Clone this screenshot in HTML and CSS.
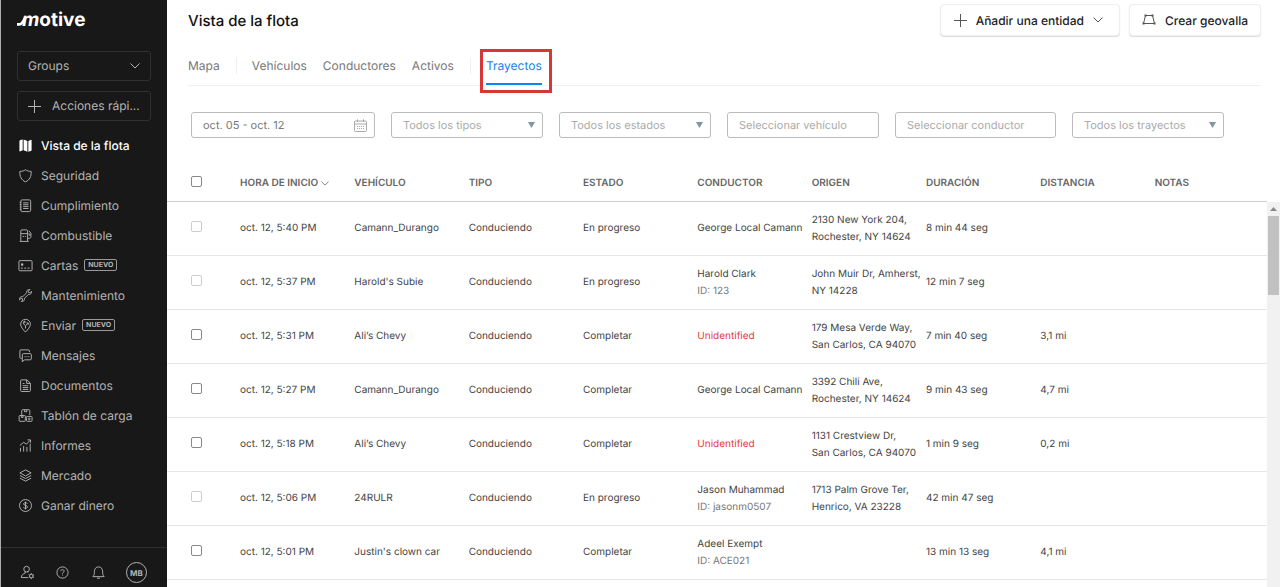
FILE: index.html
```html
<!DOCTYPE html>
<html lang="es">
<head>
    <meta charset="UTF-8">
    <meta name="viewport" content="width=device-width, initial-scale=1.0">
    <title>Vista de la flota</title>
    <link rel="stylesheet" href="styles.css">
</head>
<body>

    <aside class="sidebar">
        <a class="logo" href="#"><svg class="logo-tail" viewBox="0 0 9 10"><path d="M0 8.4H2.2C5 8.4 5.6 6 8.6 1" fill="none" stroke="#fff" stroke-width="2.6"/></svg><span class="logo-m">m</span><span>otive</span></a>

        <button class="side-button groups">
            <span>Groups</span>
            <svg class="chevron" viewBox="0 0 10 6"><path d="M.5 .5L5 5L9.5 .5"/></svg>
        </button>
        <button class="side-button actions">
            <svg class="plus" viewBox="0 0 13 13"><path d="M6.5 0V13M0 6.5H13"/></svg>
            <span>Acciones rápi...</span>
        </button>

        <nav class="nav">
            <a class="nav-item active" href="#">
                <svg class="icon" viewBox="0 0 16 16"><path class="solid" d="M1.5 3.4Q1.5 2.4 2.5 2.2L5 1.6V13L2.6 14.2Q1.5 14.6 1.5 13.6ZM6 1.6L10 3.2V14.6L6 13ZM11 3.2L13.4 2Q14.5 1.6 14.5 2.6V12.8Q14.5 13.6 13.6 13.9L11 14.6Z"/></svg>
                <span>Vista de la flota</span>
            </a>
            <a class="nav-item" href="#">
                <svg class="icon" viewBox="0 0 16 16"><path d="M8 1.8C6.2 3.2 4.2 3.6 2 3.6C1.6 9 3.6 12.8 8 14.8C12.4 12.8 14.4 9 14 3.6C11.8 3.6 9.8 3.2 8 1.8Z"/></svg>
                <span>Seguridad</span>
            </a>
            <a class="nav-item" href="#">
                <svg class="icon" viewBox="0 0 16 16"><rect x="3" y="2" width="10.5" height="12.5" rx="1.5"/><path d="M5.5 5.2H11.2M5.5 7.2H11.2M5.5 9.2H11.2M5.5 11.2H11.2M1.8 4.5H3.5M1.8 7H3.5M1.8 9.5H3.5M1.8 12H3.5"/></svg>
                <span>Cumplimiento</span>
            </a>
            <a class="nav-item" href="#">
                <svg class="icon" viewBox="0 0 16 16"><path d="M3 14V3.2C3 2.4 3.4 2 4.2 2H9C9.8 2 10.2 2.4 10.2 3.2V14M1.8 14.3H11.4M3 6H10.2M10.2 11H12.2C13.8 11 13.8 9.5 13.8 8V5.5L11.6 3M11.8 5.5V7.5H13.8M5 9H6.5M7.5 9H8.5"/></svg>
                <span>Combustible</span>
            </a>
            <a class="nav-item" href="#">
                <svg class="icon" viewBox="0 0 16 16"><rect x="1" y="2.8" width="14" height="10.8" rx="1"/><path d="M3 10.8H5.2M6.6 10.8H8.6M10 10.8H12.4"/><path class="solid" d="M3.2 5.8H5.6V8.2H3.2Z"/></svg>
                <span>Cartas</span><span class="badge">NUEVO</span>
            </a>
            <a class="nav-item" href="#">
                <svg class="icon" viewBox="0 0 16 16"><path d="M9.2 5.2C8.8 3 10.4 1.3 12.6 1.6L11 3.4L11.3 4.9L12.8 5.1L14.4 3.5C14.8 5.6 13.2 7.4 10.9 7L7 10.9C7.3 13.2 5.6 14.8 3.4 14.4L5 12.8L4.7 11.3L3.3 11L1.6 12.6C1.2 10.4 2.9 8.8 5.1 9.2Z"/></svg>
                <span>Mantenimiento</span>
            </a>
            <a class="nav-item" href="#">
                <svg class="icon" viewBox="0 0 16 16"><path d="M8 15C5.5 12.4 2.8 9.4 2.8 6.6C2.8 3.6 5.2 1.4 8 1.4S13.2 3.6 13.2 6.6C13.2 9.4 10.5 12.4 8 15Z"/><path d="M8 11.2V8.2L5.2 5.6L7 4M8 8.2L10.8 5.6M9 5.2L10.9 5.4V7.2"/><circle cx="6.9" cy="4.2" r=".8"/></svg>
                <span>Enviar</span><span class="badge">NUEVO</span>
            </a>
            <a class="nav-item" href="#">
                <svg class="icon" viewBox="0 0 16 16"><path d="M4 11H2.8C2.3 11 2 10.7 2 10.2V3.2C2 2.4 2.4 2 3.2 2H11C11.8 2 12.2 2.4 12.2 3.2V4.4"/><path d="M4.6 14.8V7C4.6 6.4 5 6 5.6 6H13C13.8 6 14.2 6.4 14.2 7V11.6C14.2 12.2 13.8 12.6 13 12.6H6.8Z"/><path d="M7 9.3H8M9 9.3H10M11 9.3H12"/></svg>
                <span>Mensajes</span>
            </a>
            <a class="nav-item" href="#">
                <svg class="icon" viewBox="0 0 16 16"><path d="M2.8 3C2.8 2.3 3.2 2 3.8 2H9.4L13.2 5.6V13.4C13.2 14 12.8 14.4 12.2 14.4H3.8C3.2 14.4 2.8 14 2.8 13.4ZM9.2 2V5.8H13.2M5 5.8H7M5 8.2H11M5 10.2H11M5 12.2H11"/></svg>
                <span>Documentos</span>
            </a>
            <a class="nav-item" href="#">
                <svg class="icon" viewBox="0 0 16 16"><path d="M4 7.6V2.8C4 2.2 4.4 1.8 5 1.8H11.6C12.2 1.8 12.6 2.2 12.6 2.8V7.6M7 2V4H9.4V2"/><rect x="1.2" y="8" width="6.6" height="6.2" rx=".8"/><path d="M3.6 8V10H5.4V8"/><rect x="9" y="9" width="6" height="5.2" rx=".8"/><circle cx="12" cy="11.6" r=".9"/></svg>
                <span>Tablón de carga</span>
            </a>
            <a class="nav-item" href="#">
                <svg class="icon" viewBox="0 0 16 16"><path d="M2.6 14.5V10.5M6 14.5V8.5M9.5 14.5V9.5M13 14.5V6M2 8L6 4.6L9 6.6L13 2.4M10.2 2H13.4V5"/></svg>
                <span>Informes</span>
            </a>
            <a class="nav-item" href="#">
                <svg class="icon" viewBox="0 0 16 16"><path d="M8 2L14 5.2L8 8.4L2 5.2ZM2 8L8 11.2L14 8M2 10.8L8 14L14 10.8"/></svg>
                <span>Mercado</span>
            </a>
            <a class="nav-item" href="#">
                <svg class="icon" viewBox="0 0 16 16"><circle cx="8" cy="8" r="6.4"/><path d="M10 6C9.6 5.2 9 5 8 5C6.8 5 6 5.5 6 6.4C6 8.4 10.1 7.3 10.1 9.5C10.1 10.5 9.2 11 8 11C6.9 11 6.2 10.7 5.8 9.9M8 3.8V12.2"/></svg>
                <span>Ganar dinero</span>
            </a>
        </nav>

        <div class="side-footer">
            <button class="foot-button" aria-label="Cuenta">
                <svg class="icon" viewBox="0 0 16 16"><circle cx="7" cy="4.4" r="3"/><path d="M5.6 7V8.6C3.4 9.4 1.4 10.6 1.4 13.4H8.4M8.4 7V8.2"/><circle cx="12" cy="11.8" r="1.9"/><path d="M12 8.6V9.9M12 13.7V15M9.2 10.2L10.4 10.9M13.6 12.7L14.8 13.4M9.2 13.4L10.4 12.7M13.6 10.9L14.8 10.2"/></svg>
            </button>
            <button class="foot-button" aria-label="Ayuda">
                <svg class="icon" viewBox="0 0 16 16"><circle cx="8" cy="8" r="6"/><path d="M6.2 6.6C6.2 5.5 7 4.9 8 4.9S9.8 5.6 9.8 6.5C9.8 7.7 8 7.7 8 9.2M8 10.2V11.2"/></svg>
            </button>
            <button class="foot-button" aria-label="Notificaciones">
                <svg class="icon" viewBox="0 0 16 16"><path d="M2 12.4C3.4 11 3.6 9.6 3.6 7C3.6 4 5.4 2 8 2S12.4 4 12.4 7C12.4 9.6 12.6 11 14 12.4ZM6.4 14H9.6"/></svg>
            </button>
            <button class="avatar">MB</button>
        </div>
    </aside>

    <main class="main">
        <header class="header">
            <h1 class="title">Vista de la flota</h1>
            <button class="button">
                <svg class="plus" viewBox="0 0 13 13"><path d="M6.5 0V13M0 6.5H13"/></svg>
                <span>Añadir una entidad</span>
                <svg class="chevron" viewBox="0 0 10 6"><path d="M.5 .5L5 5L9.5 .5"/></svg>
            </button>
            <button class="button fence">
                <svg class="fence-icon" viewBox="0 0 14 12"><path d="M3.5 1.5H10.5L12.5 9.5H1.5Z"/><path class="dots" d="M2.5 .5H4.5V2.5H2.5ZM9.5 .5H11.5V2.5H9.5ZM.5 8.5H2.5V10.5H.5ZM11.5 8.5H13.5V10.5H11.5Z"/></svg>
                <span>Crear geovalla</span>
            </button>
        </header>

        <nav class="tabs">
            <a class="tab" href="#">Mapa</a>
            <span class="divider"></span>
            <a class="tab" href="#">Vehículos</a>
            <a class="tab" href="#">Conductores</a>
            <a class="tab" href="#">Activos</a>
            <span class="divider"></span>
            <a class="tab selected" href="#">Trayectos</a>
        </nav>

        <form class="filters">
            <label class="field date">
                <input type="text" value="oct. 05 - oct. 12" aria-label="Fechas">
                <svg class="calendar" viewBox="0 0 13 13"><path d="M1.5 2H11.5Q12.5 2 12.5 3V11.5Q12.5 12.5 11.5 12.5H1.5Q.5 12.5 .5 11.5V3Q.5 2 1.5 2ZM.5 5H12.5M3.5 .3V3M9.5 .3V3M3 7.5H4M5 7.5H6M7 7.5H8M9 7.5H10M3 9.5H4M5 9.5H6M7 9.5H8M9 9.5H10"/></svg>
            </label>
            <label class="field">
                <select aria-label="Tipo"><option>Todos los tipos</option></select>
                <svg class="arrow" viewBox="0 0 7 6"><path d="M0 0H7L3.5 6Z"/></svg>
            </label>
            <label class="field">
                <select aria-label="Estado"><option>Todos los estados</option></select>
                <svg class="arrow" viewBox="0 0 7 6"><path d="M0 0H7L3.5 6Z"/></svg>
            </label>
            <label class="field">
                <input type="text" placeholder="Seleccionar vehículo" aria-label="Vehículo">
            </label>
            <label class="field driver">
                <input type="text" placeholder="Seleccionar conductor" aria-label="Conductor">
            </label>
            <label class="field">
                <select aria-label="Trayecto"><option>Todos los trayectos</option></select>
                <svg class="arrow" viewBox="0 0 7 6"><path d="M0 0H7L3.5 6Z"/></svg>
            </label>
        </form>

        <div class="table-area">
            <table class="trips">
                <thead>
                    <tr>
                        <th class="check"><input type="checkbox" aria-label="Seleccionar todo"></th>
                        <th>HORA DE INICIO <svg class="sort" viewBox="0 0 10 6"><path d="M.5 .5L5 5L9.5 .5"/></svg></th>
                        <th>VEHÍCULO</th>
                        <th>TIPO</th>
                        <th>ESTADO</th>
                        <th>CONDUCTOR</th>
                        <th>ORIGEN</th>
                        <th>DURACIÓN</th>
                        <th>DISTANCIA</th>
                        <th>NOTAS</th>
                    </tr>
                </thead>
                <tbody>
                    <tr>
                        <td class="check"><input type="checkbox" aria-label="Seleccionar" disabled></td>
                        <td>oct. 12, 5:40 PM</td><td>Camann_Durango</td><td>Conduciendo</td><td>En progreso</td>
                        <td>George Local Camann</td>
                        <td>2130 New York 204,<br>Rochester, NY 14624</td>
                        <td>8 min 44 seg</td><td></td><td></td>
                    </tr>
                    <tr>
                        <td class="check"><input type="checkbox" aria-label="Seleccionar" disabled></td>
                        <td>oct. 12, 5:37 PM</td><td>Harold's Subie</td><td>Conduciendo</td><td>En progreso</td>
                        <td>Harold Clark<br><span class="driver-id">ID: 123</span></td>
                        <td>John Muir Dr, Amherst,<br>NY 14228</td>
                        <td>12 min 7 seg</td><td></td><td></td>
                    </tr>
                    <tr>
                        <td class="check"><input type="checkbox" aria-label="Seleccionar"></td>
                        <td>oct. 12, 5:31 PM</td><td>Ali’s Chevy</td><td>Conduciendo</td><td>Completar</td>
                        <td class="unidentified">Unidentified</td>
                        <td>179 Mesa Verde Way,<br>San Carlos, CA 94070</td>
                        <td>7 min 40 seg</td><td>3,1 mi</td><td></td>
                    </tr>
                    <tr>
                        <td class="check"><input type="checkbox" aria-label="Seleccionar"></td>
                        <td>oct. 12, 5:27 PM</td><td>Camann_Durango</td><td>Conduciendo</td><td>Completar</td>
                        <td>George Local Camann</td>
                        <td>3392 Chili Ave,<br>Rochester, NY 14624</td>
                        <td>9 min 43 seg</td><td>4,7 mi</td><td></td>
                    </tr>
                    <tr>
                        <td class="check"><input type="checkbox" aria-label="Seleccionar"></td>
                        <td>oct. 12, 5:18 PM</td><td>Ali’s Chevy</td><td>Conduciendo</td><td>Completar</td>
                        <td class="unidentified">Unidentified</td>
                        <td>1131 Crestview Dr,<br>San Carlos, CA 94070</td>
                        <td>1 min 9 seg</td><td>0,2 mi</td><td></td>
                    </tr>
                    <tr>
                        <td class="check"><input type="checkbox" aria-label="Seleccionar" disabled></td>
                        <td>oct. 12, 5:06 PM</td><td>24RULR</td><td>Conduciendo</td><td>En progreso</td>
                        <td>Jason Muhammad<br><span class="driver-id">ID: jasonm0507</span></td>
                        <td>1713 Palm Grove Ter,<br>Henrico, VA 23228</td>
                        <td>42 min 47 seg</td><td></td><td></td>
                    </tr>
                    <tr>
                        <td class="check"><input type="checkbox" aria-label="Seleccionar"></td>
                        <td>oct. 12, 5:01 PM</td><td>Justin's clown car</td><td>Conduciendo</td><td>Completar</td>
                        <td>Adeel Exempt<br><span class="driver-id">ID: ACE021</span></td>
                        <td></td>
                        <td>13 min 13 seg</td><td>4,1 mi</td><td></td>
                    </tr>
                </tbody>
            </table>
            <div class="scrollbar">
                <svg class="scroll-up" viewBox="0 0 7 4"><path d="M0 4L3.5 0L7 4Z"/></svg>
                <div class="thumb"></div>
            </div>
        </div>
    </main>

</body>
</html>
```

FILE: styles.css
```css
* {
    box-sizing: border-box;
}
body {
    margin: 0;
    display: flex;
    height: 100vh;
    overflow: hidden;
    font-family: Inter, "Liberation Sans", sans-serif;
    font-size: 12px;
    text-rendering: geometricPrecision;
    color: #444;
    background: #fff;
}
button, input, select {
    font: inherit;
    color: inherit;
    text-rendering: inherit;
}
a {
    color: inherit;
    text-decoration: none;
}
svg {
    flex: none;
    fill: none;
    stroke: currentColor;
}

/* Sidebar */
.sidebar {
    display: flex;
    flex-direction: column;
    flex: none;
    width: 167px;
    padding-top: 7px;
    border-left: 1px solid #aaa;
    background: #181818;
    color: #b4b4b4;
}
.logo {
    display: flex;
    align-items: center;
    height: 24px;
    margin: 0 16px 20px;
    color: #fff;
    font-size: 19px;
    font-weight: 700;
}
.logo-tail {
    width: 9px;
    height: 10px;
    margin: 0 -4px 5px 0;
    align-self: flex-end;
}
.logo-m {
    font-style: italic;
}
.side-button {
    display: flex;
    align-items: center;
    height: 30px;
    margin: 0 16px 10px;
    padding: 0 10px 2px;
    border: 1px solid #303030;
    border-radius: 3px;
    background: none;
}
.side-button svg {
    margin-top: 2px;
}
.groups {
    justify-content: space-between;
}
.actions {
    gap: 11px;
}
.chevron {
    width: 10px;
    height: 6px;
}
.plus {
    width: 13px;
    height: 13px;
}
.nav {
    flex: 1;
    margin-top: -1px;
}
.nav-item {
    display: flex;
    align-items: center;
    height: 30px;
    padding-left: 17px;
}
.nav-item .icon {
    margin: 1px 8px 0 0;
}
.active {
    color: #fff;
    font-weight: 500;
}
.icon {
    width: 15px;
    height: 15px;
}
.solid {
    fill: currentColor;
    stroke: none;
}
.badge {
    height: 12px;
    margin: 0 0 0 6px;
    padding: 0 3px;
    border: 1px solid #999;
    border-radius: 2px;
    font-size: 7px;
    line-height: 10px;
    font-weight: 700;
}
.side-footer {
    display: flex;
    align-items: center;
    justify-content: space-between;
    height: 40px;
    padding: 10px 20px 0 19px;
    border-top: 1px solid #303030;
}
.foot-button {
    display: flex;
    padding: 0;
    border: 0;
    background: none;
}
.avatar {
    width: 21px;
    height: 21px;
    padding: 0;
    border: 1px solid #b4b4b4;
    border-radius: 50%;
    background: none;
    font-size: 8px;
    font-weight: 700;
}

/* Header and tabs */
.main {
    display: flex;
    flex-direction: column;
    flex: 1;
    min-width: 0;
}
.header {
    display: flex;
    align-items: center;
    height: 40px;
    padding: 0 19px 0 21px;
}
.title {
    flex: 1;
    margin: 0;
    color: #111;
    font-size: 15px;
    font-weight: 500;
}
.button {
    display: flex;
    align-items: center;
    gap: 9px;
    height: 32px;
    padding: 0 16px 0 13px;
    border: 1px solid #eee;
    border-radius: 4px;
    background: #fff;
    box-shadow: 0 1px 1px #ddd;
    color: #222;
    font-weight: 500;
}
.button svg {
    color: #555;
}
.fence {
    margin-left: 9px;
    padding: 0 12px;
}
.fence-icon {
    width: 14px;
    height: 12px;
}
.button .dots {
    fill: currentColor;
    stroke: none;
}
.tabs {
    display: flex;
    align-items: center;
    gap: 16px;
    height: 46px;
    margin: 0 19px 0 21px;
    border-bottom: 1px solid #f0f0f0;
    color: #777;
}
.tab {
    display: flex;
    align-items: center;
    height: 45px;
    padding-top: 7px;
    border-bottom: 2px solid transparent;
}
.divider {
    width: 1px;
    height: 17px;
    margin: 5px -1px 0 0;
    background: #eee;
}
.selected {
    position: relative;
    border-color: #0c87f2;
    color: #1a7fe8;
}
.selected::after {
    content: "";
    position: absolute;
    top: 9px;
    right: -10px;
    bottom: -10px;
    left: -6px;
    border: 3px solid #d93636;
}

/* Filters */
.filters {
    display: flex;
    gap: 16px;
    padding: 26px 24px 0;
    font-size: 11px;
}
.field {
    display: flex;
    align-items: center;
    width: 152px;
    height: 26px;
    padding: 0 7px 0 11px;
    border: 1px solid #bbb;
    border-radius: 3px;
    color: #aaa;
}
.field input, .field select {
    flex: 1;
    min-width: 0;
    padding: 0;
    border: 0;
    outline: 0;
    background: none;
    appearance: none;
}
.field input::placeholder {
    color: #aaa;
}
.date {
    width: 184px;
    color: #777;
}
.driver {
    width: 161px;
}
.calendar {
    width: 13px;
    height: 13px;
    color: #aaa;
}
.arrow {
    width: 7px;
    height: 6px;
    fill: #7f95a3;
    stroke: none;
}

/* Trips table */
.table-area {
    display: flex;
    flex: 1;
    min-height: 0;
    margin-top: 24px;
}
.trips {
    flex: 1;
    align-self: flex-start;
    border-collapse: separate;
    border-spacing: 0;
    table-layout: fixed;
    width: 100%;
    font-size: 10px;
    line-height: 17px;
}
.trips th, .trips td {
    padding: 0 0 0 2px;
    text-align: left;
    white-space: nowrap;
}
.trips th {
    height: 40px;
    padding-top: 3px;
    border-bottom: 1px solid #ccc;
    color: #666;
    font-weight: 600;
}
.trips td {
    height: 54px;
    border-bottom: 1px solid #e6e6e6;
}
.trips .check {
    width: 71px;
    padding-left: 24px;
}
.check input {
    appearance: none;
    display: block;
    width: 11px;
    height: 11px;
    margin: 0 0 4px;
    border: 1px solid #888;
    border-radius: 2px;
}
.check input:disabled {
    border-color: #ccc;
}
.sort {
    width: 8px;
    height: 5px;
}
.driver-id {
    color: #777;
}
.unidentified {
    color: #e23b3b;
}
.scrollbar {
    flex: none;
    width: 13px;
    margin-top: 40px;
    padding: 5px 1px 0;
    background: #f1f1f1;
}
.scroll-up {
    display: block;
    width: 7px;
    height: 4px;
    margin: 0 auto 5px;
    fill: #888;
    stroke: none;
}
.thumb {
    height: 79px;
    background: #c1c1c1;
}
```
